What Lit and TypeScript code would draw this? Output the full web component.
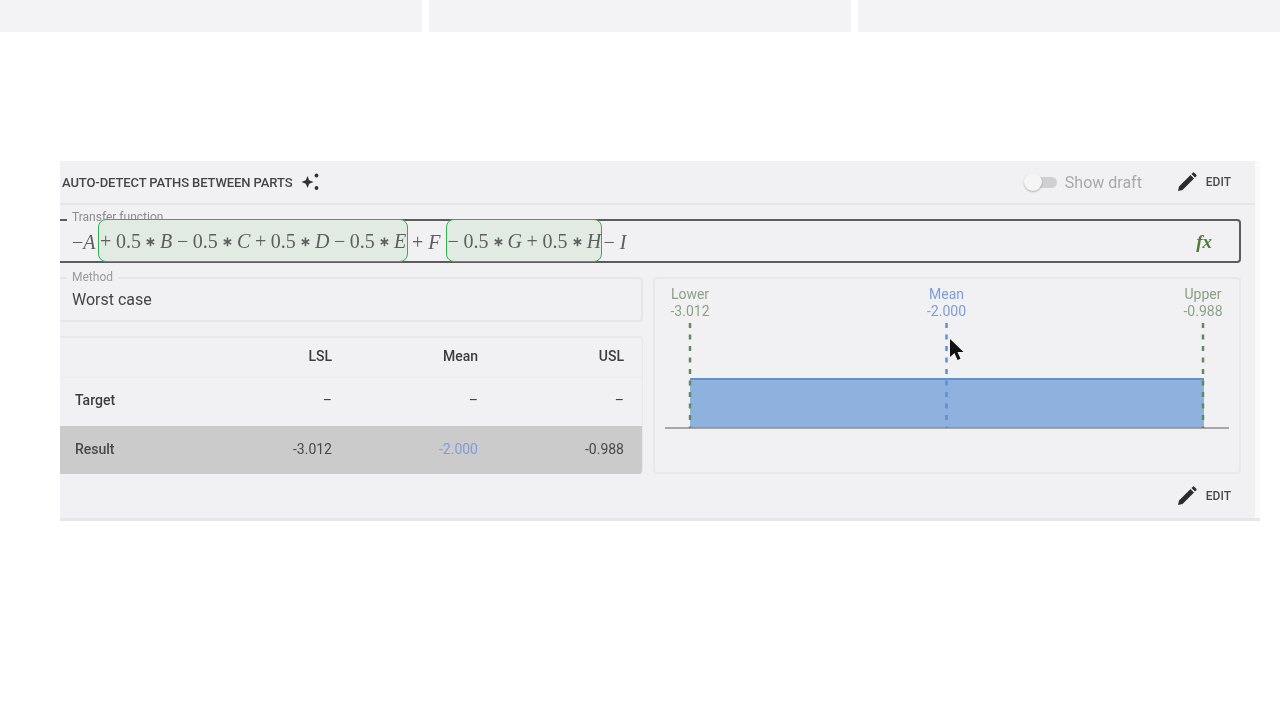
import { LitElement, html, css, svg } from "lit";
import { customElement } from "lit/decorators.js";

const pencil = html`<svg class="pencil" viewBox="0 0 24 24"><path d="M3 21l1-4.500L15.500 5l3.500 3.500L7.500 20zM16.500 4l1.300-1.300a1 1 0 0 1 1.400 0l2.100 2.100a1 1 0 0 1 0 1.400L20 7.500z"/></svg>`;

const term = (parts: string[]) =>
  parts.map((p) =>
    /^[A-Z]$/.test(p)
      ? html`<i>${p}</i>`
      : p === "∗"
        ? html`<span class="star">${p}</span>`
        : html`<span>${p}</span>`
  );

@customElement("app-root")
export class AppRoot extends LitElement {
  static styles = css`
    :host { display: block; width: 1280px; height: 720px; background: #fff; overflow: hidden; font-family: Roboto, "Liberation Sans", sans-serif; color: #3c3c3e; }
    .tops { display: grid; grid-template-columns: repeat(3, 1fr); gap: 7px; height: 32px; margin-bottom: 129px; }
    .tops div { background: #f3f3f5; }
    .wrap { position: relative; margin-left: 60px; width: 1200px; height: 360px; background: #fafafb; filter: blur(0.45px); }
    .panel { width: 1195px; height: 357px; background: #f1f1f3; box-sizing: border-box; padding-right: 14px; display: flex; flex-direction: column; }
    .rule { height: 3px; width: 1200px; background: #e7e7e9; }
    .toolbar { margin-right: -14px; height: 44px; box-sizing: border-box; border-bottom: 2px solid #e6e6e8; display: flex; align-items: center; padding: 0 24px 0 2px; }
    .auto { font-size: 13px; font-weight: 500; color: #454547; letter-spacing: -0.1px; white-space: nowrap; width: 230px; }
    .spark { width: 20px; height: 20px; margin-left: 9px; fill: #333; }
    .spacer { flex: 1; }
    .track { position: relative; width: 24px; height: 11px; border-radius: 6px; background: #d0d0d2; margin-right: 8px; }
    .thumb { position: absolute; left: -9px; top: -4px; width: 18px; height: 18px; border-radius: 50%; background: #f5f5f6; box-shadow: 0 1px 2px rgba(0,0,0,.28); }
    .draft { font-size: 16px; color: #a9a9ab; width: 110px; }
    .pencil { width: 24px; height: 24px; fill: #2c2c2e; flex: none; }
    .edit { font-size: 12px; font-weight: 500; color: #4a4a4c; margin-left: 7px; }
    .fn { position: relative; margin-top: 14px; height: 44px; box-sizing: border-box; border: 2px solid #5c5c5e; border-left: none; border-radius: 0 4px 4px 0; display: flex; align-items: center; padding-left: 12px; font-family: "Liberation Serif", serif; font-size: 20px; color: #5e5e5e; }
    .legend { position: absolute; left: 7px; top: -11px; padding: 0 5px; background: #f1f1f3; font-family: Roboto, sans-serif; font-size: 12px; line-height: 14px; color: #8c8c8e; }
    .fn i { font-style: italic; }
    .fn span, .fn i { white-space: pre; padding-top: 2px; }
    .hl { position: relative; display: flex; align-items: center; gap: 4.6px; height: 43px; box-sizing: border-box; border: 1px solid #34b04a; border-radius: 8px; background: #e1ebe3; margin-top: -1px; padding-left: 1px; }
    .hl1 { width: 310px; margin-left: 2.5px; margin-right: 4px; }
    .hl2 { width: 156px; margin-left: 5px; margin-right: 2px; }
    .hl span, .hl i { flex: none; }
    .hl .star { width: 10px; text-align: center; font-size: 13px; font-weight: bold; }
    .fx { margin-left: auto; margin-right: 27px; font-weight: bold; font-style: italic; color: #4f7d3c; font-size: 19px; }
    .cols { margin-top: 14px; display: grid; grid-template-columns: 583px 1fr; gap: 10px; height: 197px; }
    .left { display: flex; flex-direction: column; gap: 14px; }
    .method { position: relative; height: 45px; box-sizing: border-box; border: 2px solid #e6e6e8; border-left: none; border-radius: 0 4px 4px 0; padding: 11px 0 0 12px; font-size: 16px; line-height: 19px; color: #444; }
    .method .legend { top: -9px; color: #9a9a9c; }
    .table { flex: 1; box-sizing: border-box; border: 2px solid #e8e8ea; border-left: none; border-bottom: none; border-right-width: 1px; border-radius: 0 4px 4px 0; display: grid; grid-template-columns: 100px 172px 146px 1fr; grid-template-rows: 40px 48px 48px; font-size: 14px; overflow: hidden; }
    .table > div { display: flex; align-items: center; justify-content: flex-end; padding-bottom: 3px; }
    .table > div.lab { justify-content: flex-start; padding-left: 15px; font-weight: 500; }
    .table > div.last { padding-right: 18px; }
    .table > .t { padding-bottom: 5px; }
    .h { font-weight: 500; border-bottom: 1px solid #ececee; }
    .res { background: #cbcbcb; color: #484848; }
    .blue { color: #7d9edb; }
    .chart { border: 2px solid #e8e8ea; border-radius: 4px; box-sizing: border-box; }
    .chart svg { display: block; width: 100%; height: 100%; font-family: Roboto, sans-serif; font-size: 14px; }
    .foot { margin-top: 11px; display: flex; align-items: center; justify-content: flex-end; padding-right: 10px; height: 22px; }
    .cursor { position: absolute; left: 889px; top: 178px; width: 16px; height: 24px; }
  `;

  render() {
    const top = [0, 1, 2].map(() => html`<div></div>`);
    return html`
      <div class="tops">${top}</div>
      <div class="wrap">
        <div class="panel">
          <div class="toolbar">
            <span class="auto">AUTO-DETECT PATHS BETWEEN PARTS</span>
            <svg class="spark" viewBox="0 0 20 20"><path d="M6.500 4l1.700 4.300 4.300 1.700-4.300 1.700-1.700 4.300-1.700-4.300L.5 10l4.300-1.700z"/><circle cx="15.500" cy="3.500" r="1.900"/><circle cx="15.500" cy="16" r="1.900"/></svg>
            <div class="spacer"></div>
            <div class="track"><div class="thumb"></div></div>
            <span class="draft">Show draft</span>
            ${pencil}
            <span class="edit">EDIT</span>
          </div>
          <div class="fn">
            <div class="legend">Transfer function</div>
            <span>−</span><i>A</i>
            <div class="hl hl1">${term(["+", "0.5", "∗", "B", "−", "0.5", "∗", "C", "+", "0.5", "∗", "D", "−", "0.5", "∗", "E"])}</div>
            <span>+ </span><i>F</i>
            <div class="hl hl2">${term(["−", "0.5", "∗", "G", "+", "0.5", "∗", "H"])}</div>
            <span>− </span><i>I</i>
            <span class="fx">fx</span>
          </div>
          <div class="cols">
            <div class="left">
              <div class="method"><div class="legend">Method</div>Worst case</div>
              <div class="table">
                <div class="h"></div><div class="h">LSL</div><div class="h">Mean</div><div class="h last">USL</div>
                <div class="lab t">Target</div><div class="t">–</div><div class="t">–</div><div class="t last">–</div>
                <div class="lab res">Result</div><div class="res">-3.012</div><div class="res blue">-2.000</div><div class="res last">-0.988</div>
              </div>
            </div>
            <div class="chart">
              <svg viewBox="0 0 584 193">
                ${svg`
                  <rect x="35" y="100" width="514" height="49" fill="#8fb1de"/>
                  <line x1="35" x2="549" y1="100" y2="100" stroke="#5f90d0" stroke-width="2"/>
                  <line x1="10" x2="574" y1="149" y2="149" stroke="#8e8e8e" stroke-width="1.500"/>
                  <line x1="35" x2="35" y1="44" y2="149" stroke="#5f8a5c" stroke-width="2.500" stroke-dasharray="5 6.500"/>
                  <line x1="291.500" x2="291.500" y1="44" y2="149" stroke="#5f8fd6" stroke-width="2.500" stroke-dasharray="5 6.500"/>
                  <line x1="548" x2="548" y1="44" y2="149" stroke="#5f8a5c" stroke-width="2.500" stroke-dasharray="5 6.500"/>
                  <g text-anchor="middle" fill="#8ea184">
                    <text x="35" y="19.500">Lower</text><text x="35" y="36.500">-3.012</text>
                    <text x="548" y="19.500">Upper</text><text x="548" y="36.500">-0.988</text>
                  </g>
                  <g text-anchor="middle" fill="#7d9edb">
                    <text x="291.500" y="19.500">Mean</text><text x="291.500" y="36.500">-2.000</text>
                  </g>
                `}
              </svg>
            </div>
          </div>
          <div class="foot">${pencil}<span class="edit">EDIT</span></div>
        </div>
        <div class="rule"></div>
        <svg class="cursor" viewBox="0 0 16 24"><path d="M1 0v18l4.500-4 3 7 3-1.300-3-6.700h6z" fill="#111"/></svg>
      </div>
    `;
  }
}
